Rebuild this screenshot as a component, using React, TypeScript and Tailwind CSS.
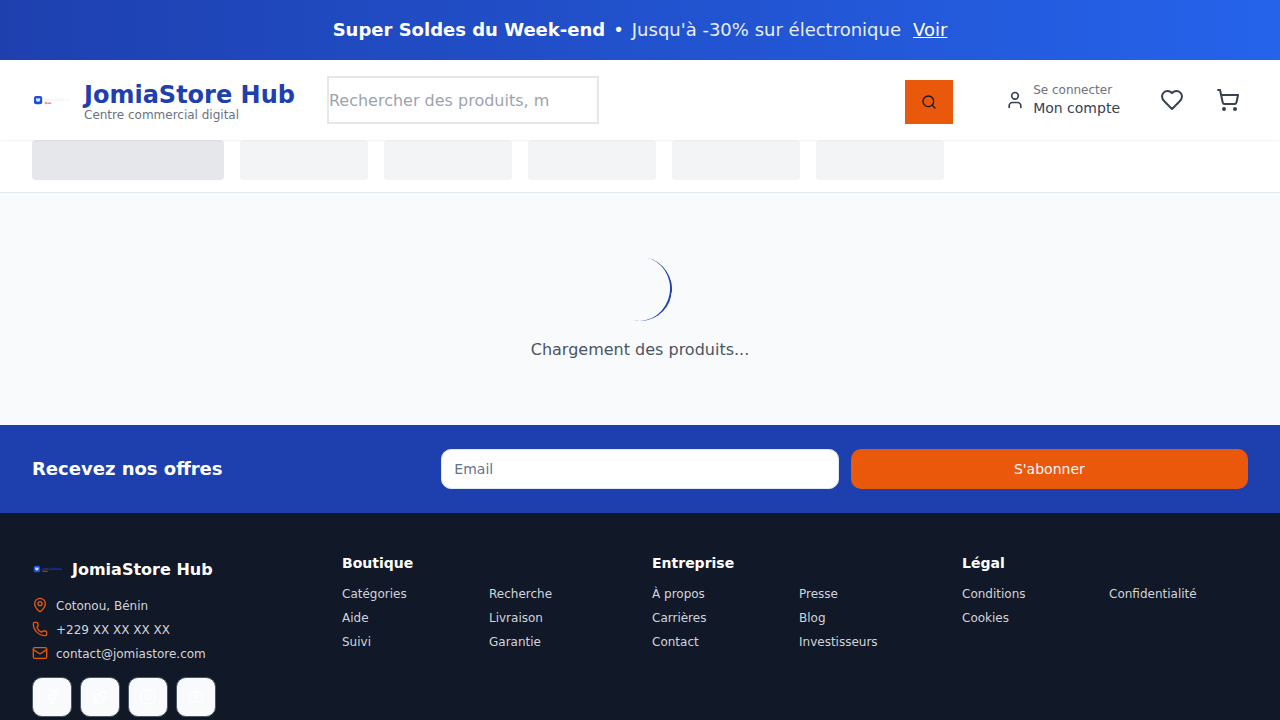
import { Facebook, Instagram, Mail, MapPin, Phone, Search, ShoppingCart, Twitter, User, Youtube } from 'lucide-react';

function Logo({ className, wordmark }: { className: string; wordmark: string }) {
  return (
    <svg viewBox="0 0 200 200" className={className} aria-hidden="true">
      <rect x="10" y="80" width="41" height="41" rx="10" fill="#1d4ed8" />
      <path d="M20 91h21v7q0 11-10.500 11t-10.500-11z" fill="#dbeafe" />
      <path d="M26 91q5 7 10 0" fill="none" stroke="#1d4ed8" strokeWidth="2" />
      <text x="64" y="105" fontSize="20" fontWeight="bold" fill={wordmark}>JomiaStore</text>
      <text x="64" y="120" fontSize="14" fontWeight="bold" fill="#ea580c">Hub</text>
    </svg>
  );
}

function HeartIcon({ className }: { className: string }) {
  return (
    <svg viewBox="0 0 24 24" className={className} fill="none" stroke="currentColor" strokeWidth="2" strokeLinecap="round" strokeLinejoin="round" aria-hidden="true">
      <path d="M19 14c1.490-1.460 3-3.210 3-5.500A5.500 5.500 0 0 0 16.500 3c-1.760 0-3 .5-4.500 2-1.500-1.500-2.740-2-4.500-2A5.500 5.500 0 0 0 2 8.500c0 2.300 1.500 4.050 3 5.500l7 7Z" />
    </svg>
  );
}

const linkGroups = [
  { title: 'Boutique', links: ['Catégories', 'Recherche', 'Aide', 'Livraison', 'Suivi', 'Garantie'] },
  { title: 'Entreprise', links: ['À propos', 'Presse', 'Carrières', 'Blog', 'Contact', 'Investisseurs'] },
  { title: 'Légal', links: ['Conditions', 'Confidentialité', 'Cookies'] },
];

const contacts = [
  { icon: MapPin, label: 'Cotonou, Bénin' },
  { icon: Phone, label: '+229 XX XX XX XX' },
  { icon: Mail, label: 'contact@jomiastore.com' },
];

const socials = [
  { icon: Facebook, label: 'Facebook' },
  { icon: Twitter, label: 'Twitter' },
  { icon: Instagram, label: 'Instagram' },
  { icon: Youtube, label: 'YouTube' },
];

function Header() {
  return (
    <header className="relative z-10 flex items-center gap-8 bg-white px-8 py-4 shadow-xs">
      <a href="#accueil" className="flex shrink-0 items-center gap-3">
        <Logo className="size-10" wordmark="#f1f5f9" />
        <div className="pt-1.5">
          <div className="text-2xl leading-6 font-bold text-[#1e40af]">JomiaStore Hub</div>
          <div className="text-xs text-[#6b7280]">Centre commercial digital</div>
        </div>
      </a>
      <form className="flex flex-1 items-end justify-between pr-1" onSubmit={(e) => e.preventDefault()}>
        <input
          type="search"
          aria-label="Rechercher"
          placeholder="Rechercher des produits, m"
          className="h-12 w-68 border-2 border-[#e5e7eb] bg-white text-base placeholder:text-[#9ca3af]"
        />
        <button type="submit" aria-label="Lancer la recherche" className="flex h-11 w-12 items-center justify-center bg-[#ea580c] text-[#0f172a]">
          <Search className="size-4" />
        </button>
      </form>
      <div className="flex shrink-0 items-center gap-4">
        <button type="button" className="flex items-center gap-2 px-4 text-left text-[#374151]">
          <User className="size-5" />
          <span>
            <span className="block text-xs text-[#6b7280]">Se connecter</span>
            <span className="block text-sm">Mon compte</span>
          </span>
        </button>
        <button type="button" aria-label="Favoris" className="p-2 text-[#374151]"><HeartIcon className="size-6" /></button>
        <button type="button" aria-label="Panier" className="p-2 text-[#374151]"><ShoppingCart className="size-6" /></button>
      </div>
    </header>
  );
}

function Footer() {
  return (
    <footer className="grid grid-cols-4 gap-6 bg-[#111827] px-8 py-10 text-[#d1d5db]">
      <div>
        <div className="mb-3 flex items-center gap-2">
          <Logo className="size-8" wordmark="#1e40af" />
          <span className="pt-0.5 font-bold text-white">JomiaStore Hub</span>
        </div>
        <ul className="space-y-1.5 text-xs leading-[18px]">
          {contacts.map(({ icon: Icon, label }) => (
            <li key={label} className="flex items-start gap-2">
              <Icon className="size-4 text-[#ea580c]" />
              <span>{label}</span>
            </li>
          ))}
        </ul>
        <div className="mt-3.5 flex gap-2">
          {socials.map(({ icon: Icon, label }) => (
            <button key={label} type="button" aria-label={label} className="flex size-10 items-center justify-center rounded-[10px] border border-[#4b5563] bg-slate-50 text-white">
              <Icon className="size-4" />
            </button>
          ))}
        </div>
      </div>
      {linkGroups.map((group) => (
        <nav key={group.title} aria-label={group.title}>
          <h3 className="mb-3 text-sm font-bold text-white">{group.title}</h3>
          <ul className="grid grid-cols-2 gap-x-2 gap-y-1.5 text-xs leading-[18px]">
            {group.links.map((link) => (
              <li key={link}><a href="#" className="hover:text-white">{link}</a></li>
            ))}
          </ul>
        </nav>
      ))}
    </footer>
  );
}

export default function App() {
  return (
    <div className="bg-slate-50 font-['DejaVu_Sans',sans-serif] text-[#111827]">
      <div className="flex items-center justify-center bg-linear-to-r/srgb from-[#1e40af] to-[#2563eb] px-8 py-4 text-lg leading-7 text-white">
        <span className="font-bold">Super Soldes du Week-end</span>
        <span className="mx-2">•</span>
        <span className="opacity-90">Jusqu'à -30% sur électronique</span>
        <a href="#soldes" className="ml-3 underline">Voir</a>
      </div>
      <Header />
      <div className="flex gap-4 border-b border-slate-200 bg-white px-8 pb-3">
        <div className="h-10 w-48 rounded bg-[#e5e7eb]" />
        {[1, 2, 3, 4, 5].map((n) => (
          <div key={n} className="h-10 w-32 rounded bg-[#f3f4f6]" />
        ))}
      </div>
      <main className="flex flex-col items-center pt-16 pb-[62px]">
        <div className="size-16 -rotate-80 rounded-full border-b-2 border-[#1e40af]" />
        <p className="mt-4 leading-[26px] text-[#4b5563]">Chargement des produits...</p>
      </main>
      <form className="grid grid-cols-3 items-center gap-3 bg-[#1e40af] px-8 py-6" onSubmit={(e) => e.preventDefault()}>
        <h2 className="text-lg font-bold text-white">Recevez nos offres</h2>
        <input type="email" aria-label="Email" placeholder="Email" className="h-10 w-full rounded-[10px] border border-slate-200 bg-white px-3 text-sm placeholder:text-slate-500" />
        <button type="submit" className="h-10 rounded-[10px] bg-[#ea580c] text-sm text-slate-50">S'abonner</button>
      </form>
      <Footer />
    </div>
  );
}
